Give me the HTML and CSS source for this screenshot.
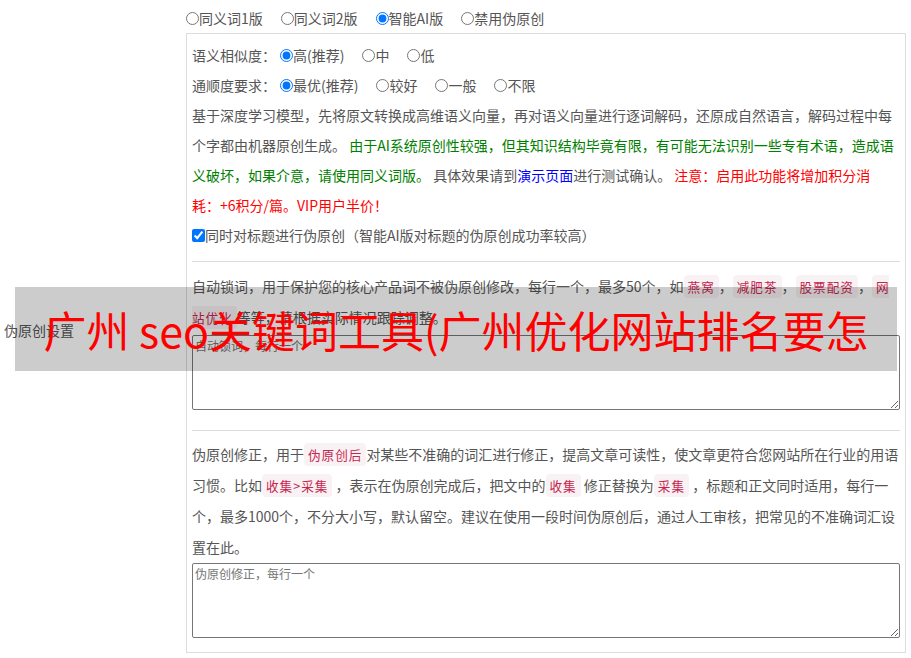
FILE: index.html
```html
<!DOCTYPE html>
<html lang="zh-CN">
<head>
<meta charset="utf-8">
<title>伪原创设置</title>
<link rel="stylesheet" href="styles.css">
</head>
<body>
<div class="form-row">
  <div class="form-label">伪原创设置</div>
  <div class="form-field">
    <div class="mode-row">
      <label class="opt"><input type="radio" name="mode">同义词1版</label>
      <label class="opt"><input type="radio" name="mode">同义词2版</label>
      <label class="opt"><input type="radio" name="mode" checked>智能AI版</label>
      <label class="opt"><input type="radio" name="mode">禁用伪原创</label>
    </div>
    <div class="box">
      <div class="opt-row">
        <span class="opt-title">语义相似度：</span>
        <label class="opt"><input type="radio" name="sim" checked>高(推荐)</label>
        <label class="opt"><input type="radio" name="sim">中</label>
        <label class="opt"><input type="radio" name="sim">低</label>
      </div>
      <div class="opt-row">
        <span class="opt-title">通顺度要求：</span>
        <label class="opt"><input type="radio" name="flu" checked>最优(推荐)</label>
        <label class="opt"><input type="radio" name="flu">较好</label>
        <label class="opt"><input type="radio" name="flu">一般</label>
        <label class="opt"><input type="radio" name="flu">不限</label>
      </div>
      <p class="desc">基于深度学习模型，先将原文转换成高维语义向量，再对语义向量进行逐词解码，还原成自然语言，解码过程中每个字都由机器原创生成。 <span class="green">由于AI系统原创性较强，但其知识结构毕竟有限，有可能无法识别一些专有术语，造成语义破坏，如果介意，请使用同义词版。</span> 具体效果请到<a class="blue" href="#">演示页面</a>进行测试确认。 <span class="red">注意：启用此功能将增加积分消耗：+6积分/篇。VIP用户半价！</span></p>
      <div class="opt-row">
        <label class="opt"><input type="checkbox" checked>同时对标题进行伪原创（智能AI版对标题的伪原创成功率较高）</label>
      </div>
      <hr class="divider">
      <p class="note">自动锁词，用于保护您的核心产品词不被伪原创修改，每行一个，最多50个，如<code>燕窝</code>，<code>减肥茶</code>，<code>股票配资</code>，<code>网站优化</code>等等，请根据实际情况跟踪调整。</p>
      <textarea class="area area-first" placeholder="自动锁词，每行一个"></textarea>
      <hr class="divider divider-second">
      <p class="note note-lg">伪原创修正，用于<code>伪原创后</code>对某些不准确的词汇进行修正，提高文章可读性，使文章更符合您网站所在行业的用语习惯。比如<code>收集&gt;采集</code> ，表示在伪原创完成后，把文中的<code>收集</code> 修正替换为<code>采集</code> ，标题和正文同时适用，每行一个，最多1000个，不分大小写，默认留空。建议在使用一段时间伪原创后，通过人工审核，把常见的不准确词汇设置在此。</p>
      <textarea class="area" placeholder="伪原创修正，每行一个"></textarea>
    </div>
  </div>
</div>
<div class="banner">广州 seo关键词工具(广州优化网站排名要怎</div>
</body>
</html>
```
FILE: styles.css
```css
body {
  margin: 0;
  font-family: "Microsoft YaHei", "Noto Sans CJK SC", "Noto Sans", sans-serif;
  font-size: 14px;
  color: #555;
  background: #fff;
}

.form-row {
  display: flex;
  align-items: center;
}

.form-label {
  width: 186px;
  box-sizing: border-box;
  padding-left: 4px;
  line-height: 20px;
}

.form-field {
  width: 720px;
  padding: 3px 0 6px;
}

.mode-row {
  display: flex;
  align-items: center;
  height: 30px;
}

.opt {
  display: inline-flex;
  align-items: center;
  margin-right: 18px;
  white-space: nowrap;
}

.opt input {
  margin: 0;
  width: 13px;
  height: 13px;
}

.box {
  border: 1px solid #ddd;
  padding: 6px 5px 14px;
}

.opt-row {
  display: flex;
  align-items: center;
  height: 30px;
}

.opt-title {
  margin-right: 4px;
}

.desc {
  margin: 0;
  padding-right: 5px;
  line-height: 30px;
}

.green { color: #008000; }
.red { color: #f00; }
.blue { color: #00f; text-decoration: none; }

.divider {
  border: 0;
  border-top: 1px solid #ddd;
  height: 0;
  margin: 11px 0 9px;
}

.divider-second {
  margin: 20px 0 8px;
}

.note {
  margin: 0;
  line-height: 30px;
}

.note-lg {
  line-height: 31px;
}

code {
  font-family: inherit;
  font-size: 12.6px;
  letter-spacing: 1px;
  color: #c7254e;
  background: #f9f2f4;
  padding: 2px 4px;
  border-radius: 4px;
}

.area {
  display: block;
  box-sizing: border-box;
  width: 100%;
  height: 75px;
  margin: 0;
  border: 1px solid #767676;
  border-radius: 2px;
  padding: 2px;
  font-family: inherit;
  font-size: 12px;
  line-height: 16px;
  color: #333;
  resize: vertical;
}

.area::placeholder {
  color: #757575;
}

.area-first {
  margin-top: 2px;
}

.banner {
  position: absolute;
  left: 15px;
  top: 287px;
  width: 882px;
  height: 84px;
  background: rgba(0, 0, 0, 0.2);
  color: #f00;
  font-size: 43px;
  line-height: 84px;
  text-align: center;
  white-space: nowrap;
  overflow: hidden;
}
```
